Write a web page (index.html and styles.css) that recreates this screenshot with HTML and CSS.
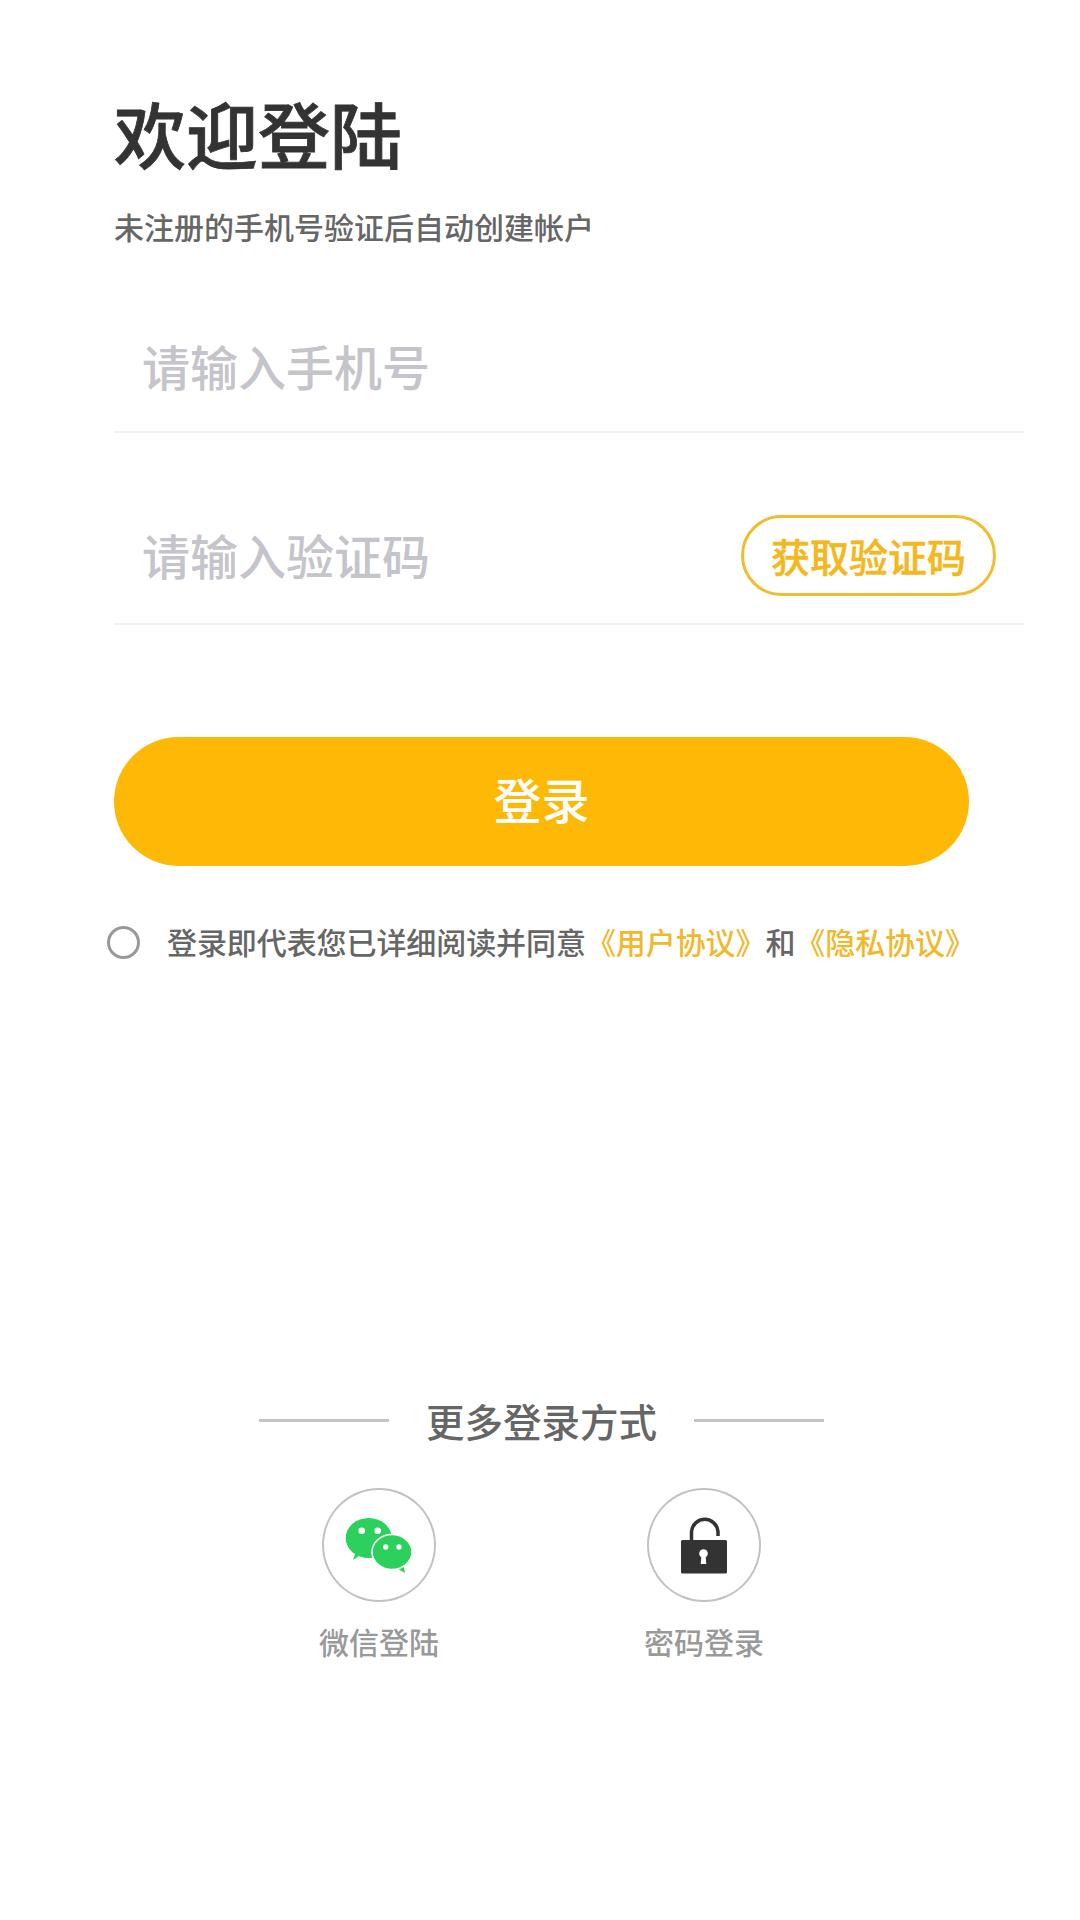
FILE: index.html
```html
<html>

<head>
    <title>登录</title>
    <meta charset="utf-8">
    <link rel="stylesheet" href="styles.css">
</head>

<body>
    <div class="container">
        <div class="title">欢迎登陆</div>
        <div class="subtitle">未注册的手机号验证后自动创建帐户</div>

        <form class="login-form" onsubmit="return false;">
            <div class="field field-phone">
                <input type="text" class="field-input" placeholder="请输入手机号" />
            </div>
            <div class="field field-code">
                <input type="text" class="field-input" placeholder="请输入验证码" />
                <button type="button" class="code-button">获取验证码</button>
            </div>
            <button type="submit" class="login-button">登录</button>
        </form>

        <div class="agree">
            <span class="radio"></span>
            <span class="agree-text">登录即代表您已详细阅读并同意<a class="link">《用户协议》</a>和<a class="link">《隐私协议》</a></span>
        </div>
    </div>

    <div class="more">
        <div class="more-title">
            <span class="more-line"></span>
            <span class="more-text">更多登录方式</span>
            <span class="more-line"></span>
        </div>
        <div class="more-items">
            <div class="more-item">
                <div class="more-icon">
                    <svg width="114" height="114" viewBox="0 0 114 114">
                        <path fill="#2bd15c" d="M31 72 L34 63 L40 66 Z" />
                        <ellipse cx="46.7" cy="50" rx="23" ry="20" fill="#2bd15c" />
                        <circle cx="39.7" cy="42.7" r="3.3" fill="#fff" />
                        <circle cx="55.7" cy="42.7" r="3.3" fill="#fff" />
                        <path fill="#2bd15c" d="M83 85 L81 75 L73 79 Z" />
                        <ellipse cx="70" cy="64" rx="20" ry="17.500" fill="#2bd15c" stroke="#fff" stroke-width="1.500" />
                        <circle cx="63.7" cy="59" r="2.7" fill="#fff" />
                        <circle cx="77" cy="59" r="2.7" fill="#fff" />
                    </svg>
                </div>
                <div class="more-label">微信登陆</div>
            </div>
            <div class="more-item">
                <div class="more-icon">
                    <svg width="114" height="114" viewBox="0 0 114 114">
                        <path fill="none" stroke="#333" stroke-width="3.500" d="M44.500 53 V43.500 A13.300 13.300 0 0 1 71 43.500 V48" />
                        <rect x="34" y="52" width="46" height="33.500" rx="1.500" fill="#333" />
                        <circle cx="56.500" cy="65.500" r="4.300" fill="#fff" />
                        <path fill="#fff" d="M54.500 67 H58.500 L59.300 76 H53.700 Z" />
                    </svg>
                </div>
                <div class="more-label">密码登录</div>
            </div>
        </div>
    </div>
</body>

</html>
```

FILE: styles.css
```css
html,
body {
    height: 100%;
    margin: 0;
}

body {
    font-family: "Noto Sans CJK SC", "Noto Sans", sans-serif;
    background-color: #ffffff;
    overflow: hidden;
}

.container {
    width: 910px;
    margin-left: 114px;
    padding-top: 88px;
}

.title {
    font-size: 72px;
    line-height: 88px;
    font-weight: 500;
    -webkit-text-stroke: 0.8px #333333;
    color: #333333;
}

.subtitle {
    margin-top: 28px;
    font-size: 30px;
    line-height: 44px;
    font-weight: 500;
    color: #666666;
}

.field {
    display: flex;
    align-items: center;
    box-sizing: border-box;
    border-bottom: 2px solid #f0f0f0;
    padding: 0 28px 0 28px;
}

.field-phone {
    margin-top: 52px;
    height: 133px;
}

.field-code {
    margin-top: 54px;
    height: 138px;
}

.field-input {
    flex-grow: 1;
    min-width: 0;
    border: none;
    padding: 0 0 2px;
    font-family: inherit;
    font-size: 48px;
    font-weight: 500;
    color: #333333;
}

.field-input:focus {
    outline: none;
}

.field-input::placeholder {
    color: #c4c4ca;
    opacity: 1;
}

.code-button {
    flex-shrink: 0;
    box-sizing: border-box;
    width: 255px;
    height: 81px;
    padding: 0;
    border: 3px solid #efbd30;
    border-radius: 41px;
    background-color: #ffffff;
    font-family: inherit;
    font-size: 39px;
    font-weight: 500;
    -webkit-text-stroke: 0.5px #f3b81f;
    color: #f3b81f;
}

.login-button {
    display: block;
    width: 855px;
    height: 129px;
    margin-top: 112px;
    padding: 0 0 7px;
    border: none;
    border-radius: 65px;
    background-color: #fdb906;
    font-family: inherit;
    font-size: 48px;
    font-weight: 500;
    color: #ffffff;
}

.agree {
    display: flex;
    align-items: center;
    margin-top: 53px;
    margin-left: -7px;
}

.radio {
    flex-shrink: 0;
    box-sizing: border-box;
    width: 33px;
    height: 33px;
    margin-right: 27px;
    border: 3px solid #999999;
    border-radius: 50%;
}

.agree-text {
    padding-bottom: 3px;
    font-size: 30px;
    line-height: 44px;
    font-weight: 500;
    letter-spacing: -0.08px;
    white-space: nowrap;
    color: #666666;
}

.link {
    font-weight: 500;
    color: #f0b92d;
}

.more {
    margin-top: 426px;
    padding-left: 3px;
}

.more-title {
    display: flex;
    justify-content: center;
    align-items: center;
}

.more-line {
    width: 130px;
    height: 3px;
    background-color: #c4c4c4;
}

.more-text {
    margin: 0 37px;
    font-size: 38.500px;
    line-height: 56px;
    font-weight: 500;
    color: #666666;
}

.more-items {
    display: flex;
    justify-content: center;
    gap: 207px;
    margin-top: 40px;
}

.more-item {
    display: flex;
    flex-direction: column;
    align-items: center;
    width: 118px;
}

.more-icon {
    box-sizing: border-box;
    width: 114px;
    height: 114px;
    border-radius: 50%;
    box-shadow: inset 0 0 0 2px #c2c2c2;
}

.more-icon svg {
    display: block;
}

.more-label {
    margin-top: 17px;
    font-size: 30px;
    line-height: 44px;
    font-weight: 500;
    white-space: nowrap;
    color: #999999;
}
```
